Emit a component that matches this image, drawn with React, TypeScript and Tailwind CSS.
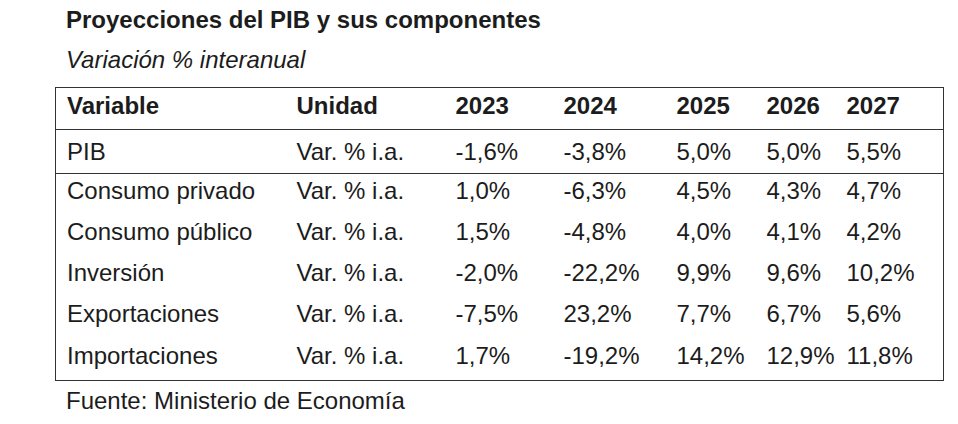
const rows = [
  { name: 'Consumo privado', values: ['1,0%', '-6,3%', '4,5%', '4,3%', '4,7%'], h: 'h-[41px]' },
  { name: 'Consumo público', values: ['1,5%', '-4,8%', '4,0%', '4,1%', '4,2%'], h: 'h-[41px]' },
  { name: 'Inversión', values: ['-2,0%', '-22,2%', '9,9%', '9,6%', '10,2%'], h: 'h-[41px]' },
  { name: 'Exportaciones', values: ['-7,5%', '23,2%', '7,7%', '6,7%', '5,6%'], h: 'h-[42px]' },
  { name: 'Importaciones', values: ['1,7%', '-19,2%', '14,2%', '12,9%', '11,8%'], h: 'h-[42px]' },
];

const years = ['2023', '2024', '2025', '2026', '2027'];

export default function App() {
  return (
    <div
      className="w-[958px] h-[424px] bg-white text-[#1c1c1c] pl-[55px] pt-[6px]"
      style={{ fontFamily: '"Liberation Sans", Arial, sans-serif' }}
    >
      <h1 className="pl-[11px] text-[24px] font-bold leading-[28px]">
        Proyecciones del PIB y sus componentes
      </h1>
      <p className="pl-[11px] mt-[12px] text-[24px] italic leading-[28px]">Variación % interanual</p>

      <table className="mt-[13px] w-[888px] table-fixed border-collapse border-[1.5px] border-[#333] text-[24px] leading-[28px]">
        <colgroup>
          <col className="w-[230px]" />
          <col className="w-[159px]" />
          <col className="w-[108px]" />
          <col className="w-[113px]" />
          <col className="w-[90px]" />
          <col className="w-[80px]" />
          <col className="w-[108px]" />
        </colgroup>
        <thead>
          <tr className="h-[42px] border-b-[1.5px] border-[#333]">
            <th className="pl-[11px] pb-[6px] text-left font-bold">Variable</th>
            <th className="pl-[11px] pb-[6px] text-left font-bold">Unidad</th>
            {years.map((y) => (
              <th key={y} className="pl-[11px] pb-[6px] text-left font-bold">{y}</th>
            ))}
          </tr>
        </thead>
        <tbody>
          <tr className="h-[44px] border-b-[1.5px] border-[#333]">
            <td className="pl-[11px]">PIB</td>
            <td className="pl-[11px]">Var. % i.a.</td>
            {['-1,6%', '-3,8%', '5,0%', '5,0%', '5,5%'].map((v, i) => (
              <td key={i} className="pl-[11px]">{v}</td>
            ))}
          </tr>
          {rows.map((r) => (
            <tr key={r.name} className={r.h}>
              <td className="pl-[11px] pb-[7px]">{r.name}</td>
              <td className="pl-[11px] pb-[7px]">Var. % i.a.</td>
              {r.values.map((v, i) => (
                <td key={i} className="pl-[11px] pb-[7px]">{v}</td>
              ))}
            </tr>
          ))}
        </tbody>
      </table>

      <p className="pl-[11px] mt-[6px] text-[24px] leading-[28px]">Fuente: Ministerio de Economía</p>
    </div>
  );
}
